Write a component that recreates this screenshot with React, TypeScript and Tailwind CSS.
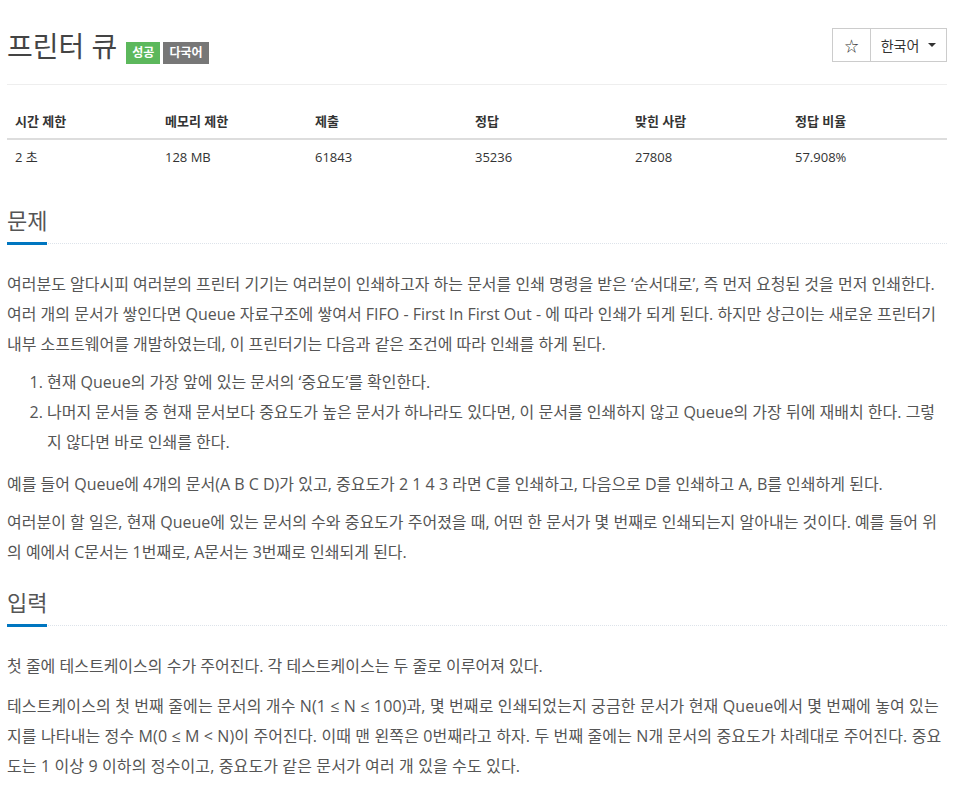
import React from 'react';

const FONT = '"Open Sans", "Noto Sans CJK KR", sans-serif';

interface Stat {
  label: string;
  value: string;
  width: string;
}

const stats: Stat[] = [
  { label: '시간 제한', value: '2 초', width: 'w-[150px]' },
  { label: '메모리 제한', value: '128 MB', width: 'w-[150px]' },
  { label: '제출', value: '61843', width: 'w-[160px]' },
  { label: '정답', value: '35236', width: 'w-[160px]' },
  { label: '맞힌 사람', value: '27808', width: 'w-[160px]' },
  { label: '정답 비율', value: '57.908%', width: '' },
];

const Headline: React.FC<{ title: string }> = ({ title }) => (
  <div className="border-b border-dotted border-[#dde3ea]">
    <h2 className="inline-block text-[22px] leading-[30px] text-[#555] pb-[7px] border-b-[3px] border-[#0076c0] -mb-[2px]">
      {title}
    </h2>
  </div>
);

const App: React.FC = () => {
  return (
    <div className="w-[970px] bg-white px-[7px] text-[#555]" style={{ fontFamily: FONT }}>
      {/* Title */}
      <div className="w-[940px] flex justify-between items-start pt-[28px] pb-[20px] border-b border-[#eee]">
        <div className="flex items-baseline gap-[3px] pt-[2px]">
          <h1 className="text-[28px] leading-[32px] text-[#444] mr-[6px]">프린터 큐</h1>
          <span className="bg-[#5cb85c] text-white text-[12px] font-bold px-[6px] leading-[22px]">성공</span>
          <span className="bg-[#777] text-white text-[12px] font-bold px-[6px] leading-[22px]">다국어</span>
        </div>
        <div className="flex border border-[#ccc] h-[34px] text-[14px] text-[#333]">
          <button className="w-[38px] flex items-center justify-center border-r border-[#ccc]">☆</button>
          <button className="w-[75px] flex items-center justify-center gap-[9px]">
            한국어
            <span className="w-0 h-0 border-l-[4px] border-r-[4px] border-t-[4px] border-l-transparent border-r-transparent border-t-[#333]" />
          </button>
        </div>
      </div>

      {/* Stats table */}
      <table className="w-[940px] mt-[19px] text-[13px] text-[#333]">
        <thead>
          <tr className="border-b-2 border-[#ddd]">
            {stats.map((s) => (
              <th key={s.label} className={`${s.width} text-left font-bold px-[8px] py-[8px] leading-[18px]`}>
                {s.label}
              </th>
            ))}
          </tr>
        </thead>
        <tbody>
          <tr>
            {stats.map((s) => (
              <td key={s.label} className="px-[8px] py-[8px] leading-[18px]">
                {s.value}
              </td>
            ))}
          </tr>
        </tbody>
      </table>

      {/* 문제 */}
      <section className="w-[940px] mt-[31px]">
        <Headline title="문제" />
        <div className="text-[16px] leading-[30px] break-all mt-[25px]">
          <p className="mb-[8px]">
            여러분도 알다시피 여러분의 프린터 기기는 여러분이 인쇄하고자 하는 문서를 인쇄 명령을 받은 ‘순서대로’, 즉 먼저 요청된 것을 먼저 인쇄한다. 여러 개의 문서가 쌓인다면 Queue 자료구조에 쌓여서 FIFO - First In First Out - 에 따라 인쇄가 되게 된다. 하지만 상근이는 새로운 프린터기 내부 소프트웨어를 개발하였는데, 이 프린터기는 다음과 같은 조건에 따라 인쇄를 하게 된다.
          </p>
          <ol className="list-decimal pl-[40px] mb-[12px]">
            <li>현재 Queue의 가장 앞에 있는 문서의 ‘중요도’를 확인한다.</li>
            <li>나머지 문서들 중 현재 문서보다 중요도가 높은 문서가 하나라도 있다면, 이 문서를 인쇄하지 않고 Queue의 가장 뒤에 재배치 한다. 그렇지 않다면 바로 인쇄를 한다.</li>
          </ol>
          <p className="mb-[8px]">
            예를 들어 Queue에 4개의 문서(A B C D)가 있고, 중요도가 2 1 4 3 라면 C를 인쇄하고, 다음으로 D를 인쇄하고 A, B를 인쇄하게 된다.
          </p>
          <p className="mb-[8px]">
            여러분이 할 일은, 현재 Queue에 있는 문서의 수와 중요도가 주어졌을 때, 어떤 한 문서가 몇 번째로 인쇄되는지 알아내는 것이다. 예를 들어 위의 예에서 C문서는 1번째로, A문서는 3번째로 인쇄되게 된다.
          </p>
        </div>
      </section>

      {/* 입력 */}
      <section className="w-[940px] mt-[20px]">
        <Headline title="입력" />
        <div className="text-[16px] leading-[30px] break-all mt-[25px]">
          <p className="mb-[10px]">첫 줄에 테스트케이스의 수가 주어진다. 각 테스트케이스는 두 줄로 이루어져 있다.</p>
          <p className="mb-[8px] tracking-[0.12px]">
            테스트케이스의 첫 번째 줄에는 문서의 개수 N(1 ≤ N ≤ 100)과, 몇 번째로 인쇄되었는지 궁금한 문서가 현재 Queue에서 몇 번째에 놓여 있는지를 나타내는 정수 M(0 ≤ M &lt; N)이 주어진다. 이때 맨 왼쪽은 0번째라고 하자. 두 번째 줄에는 N개 문서의 중요도가 차례대로 주어진다. 중요도는 1 이상 9 이하의 정수이고, 중요도가 같은 문서가 여러 개 있을 수도 있다.
          </p>
        </div>
      </section>
    </div>
  );
};

export default App;
